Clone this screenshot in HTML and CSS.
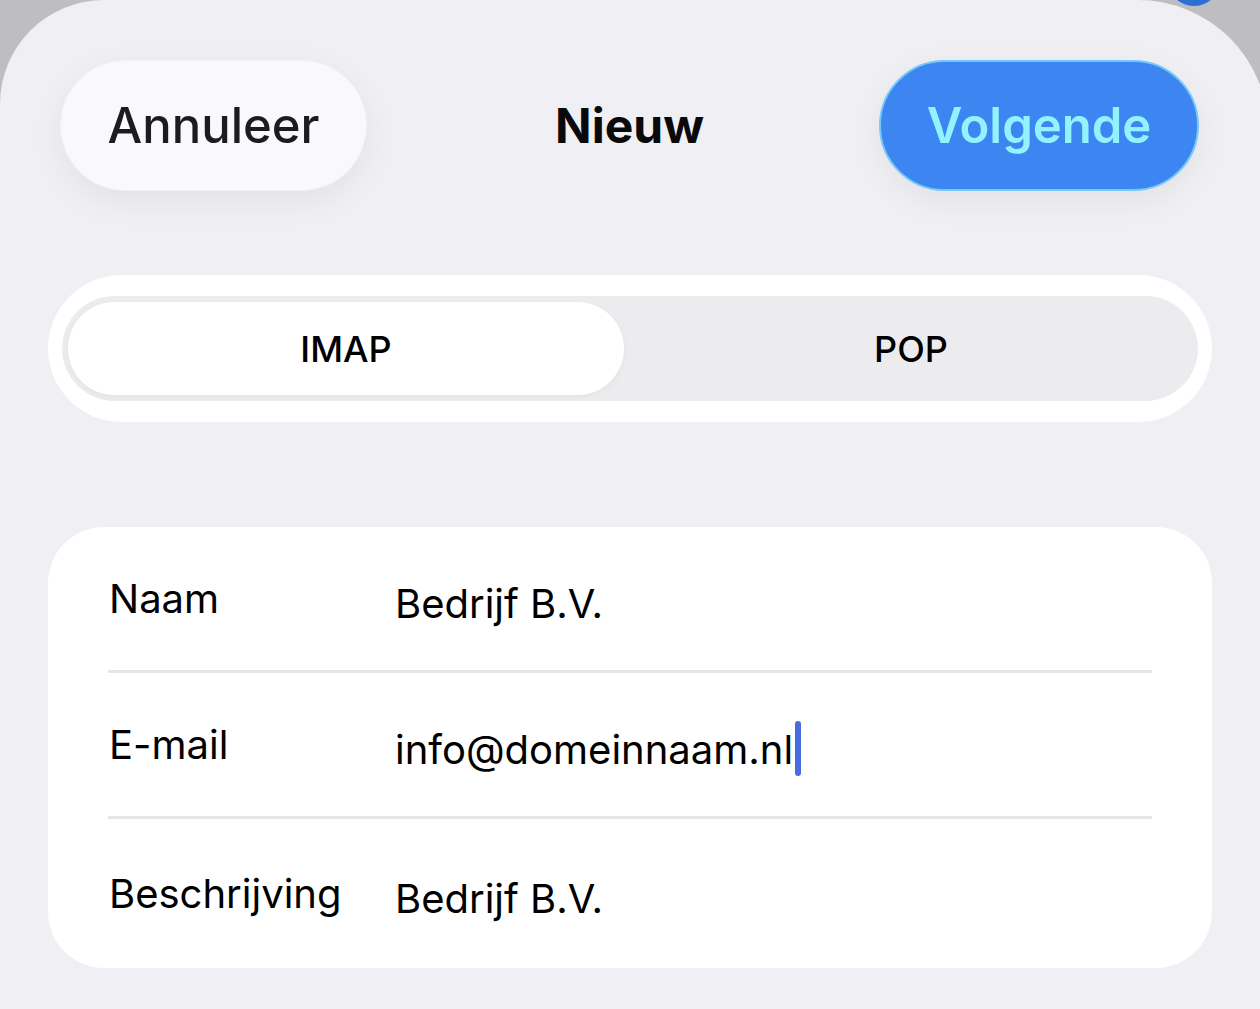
FILE: index.html
```html
<!DOCTYPE html>
<html lang="nl">
<head>
<meta charset="utf-8">
<title>Nieuw account</title>
<link rel="stylesheet" href="styles.css">
</head>
<body>
<div class="backdrop-dot"></div>
<div class="sheet">
  <header class="nav">
    <button class="btn btn-cancel">Annuleer</button>
    <h1 class="title">Nieuw</h1>
    <button class="btn btn-next">Volgende</button>
  </header>

  <div class="segment">
    <div class="segment-track">
      <div class="seg seg-active">IMAP</div>
      <div class="seg">POP</div>
    </div>
  </div>

  <div class="card">
    <div class="row">
      <span class="label">Naam</span>
      <span class="value">Bedrijf B.V.</span>
    </div>
    <div class="row">
      <span class="label">E-mail</span>
      <span class="value">info@domeinnaam.nl<span class="caret"></span></span>
    </div>
    <div class="row">
      <span class="label">Beschrijving</span>
      <span class="value">Bedrijf B.V.</span>
    </div>
  </div>
</div>
</body>
</html>
```

FILE: styles.css
```css
html, body {
  margin: 0;
  padding: 0;
}

body {
  width: 1260px;
  height: 1009px;
  overflow: hidden;
  background: #bdbdc2;
  font-family: Inter, "Liberation Sans", sans-serif;
  color: #000;
  position: relative;
}

.backdrop-dot {
  position: absolute;
  left: 1166px;
  top: -54px;
  width: 56px;
  height: 60px;
  border-radius: 50%;
  background: #2e6fd4;
}

.sheet {
  position: relative;
  box-sizing: border-box;
  width: 1268px;
  height: 1009px;
  background: #efeff4;
  border-radius: 104px 130px 0 0;
  padding: 60px 56px 0 48px;
}

.nav {
  display: grid;
  grid-template-columns: 1fr auto 1fr;
  align-items: center;
  padding: 0 13px 0 12px;
  height: 131px;
}

.btn {
  height: 131px;
  border-radius: 66px;
  font-family: inherit;
  font-size: 49px;
  box-sizing: border-box;
  cursor: pointer;
}

.btn-cancel {
  justify-self: start;
  width: 307px;
  background: #f9f9fc;
  border: 1px solid #f4f4f8;
  color: #1c1c1e;
  font-weight: 450;
  box-shadow: 0 10px 34px rgba(0, 0, 0, 0.06);
}

.btn-next {
  justify-self: end;
  width: 320px;
  background: #3d86f2;
  border: 2px solid #72c9fb;
  color: #92f3ff;
  font-weight: 600;
  box-shadow: 0 10px 34px rgba(0, 0, 0, 0.06);
}

.title {
  margin: 0;
  font-size: 48px;
  font-weight: 700;
  color: #0a0a0c;
}

.segment {
  margin-top: 84px;
  background: #ffffff;
  border-radius: 74px;
  height: 147px;
  box-sizing: border-box;
  padding: 21px 14px;
}

.segment-track {
  height: 105px;
  box-sizing: border-box;
  background: #ececee;
  border-radius: 53px;
  padding: 6px;
  display: grid;
  grid-template-columns: 1fr 1fr;
}

.seg {
  display: flex;
  align-items: center;
  justify-content: center;
  font-size: 36px;
  font-weight: 500;
  border-radius: 47px;
}

.seg-active {
  background: #ffffff;
  margin-right: 6px;
  box-shadow: 0 2px 6px rgba(0, 0, 0, 0.04);
}

.card {
  margin-top: 105px;
  background: #ffffff;
  border-radius: 56px;
  height: 441px;
  padding: 0 60px 0 60px;
  box-sizing: border-box;
  display: flex;
  flex-direction: column;
}

.row {
  height: 146px;
  display: flex;
  align-items: center;
  border-bottom: 3px solid #e6e6e9;
  box-sizing: border-box;
  padding-left: 1px;
}

.row:last-child {
  border-bottom: none;
  flex: 1;
}

.label {
  width: 286px;
  flex: none;
  font-size: 40px;
  margin-top: 0;
}

.value {
  font-size: 40px;
  display: inline-flex;
  align-items: center;
  margin-top: 9px;
}

.caret {
  display: inline-block;
  width: 6px;
  height: 55px;
  border-radius: 3px;
  background: #4a6ae0;
  margin-left: 2px;
  margin-top: -2px;
}
```
